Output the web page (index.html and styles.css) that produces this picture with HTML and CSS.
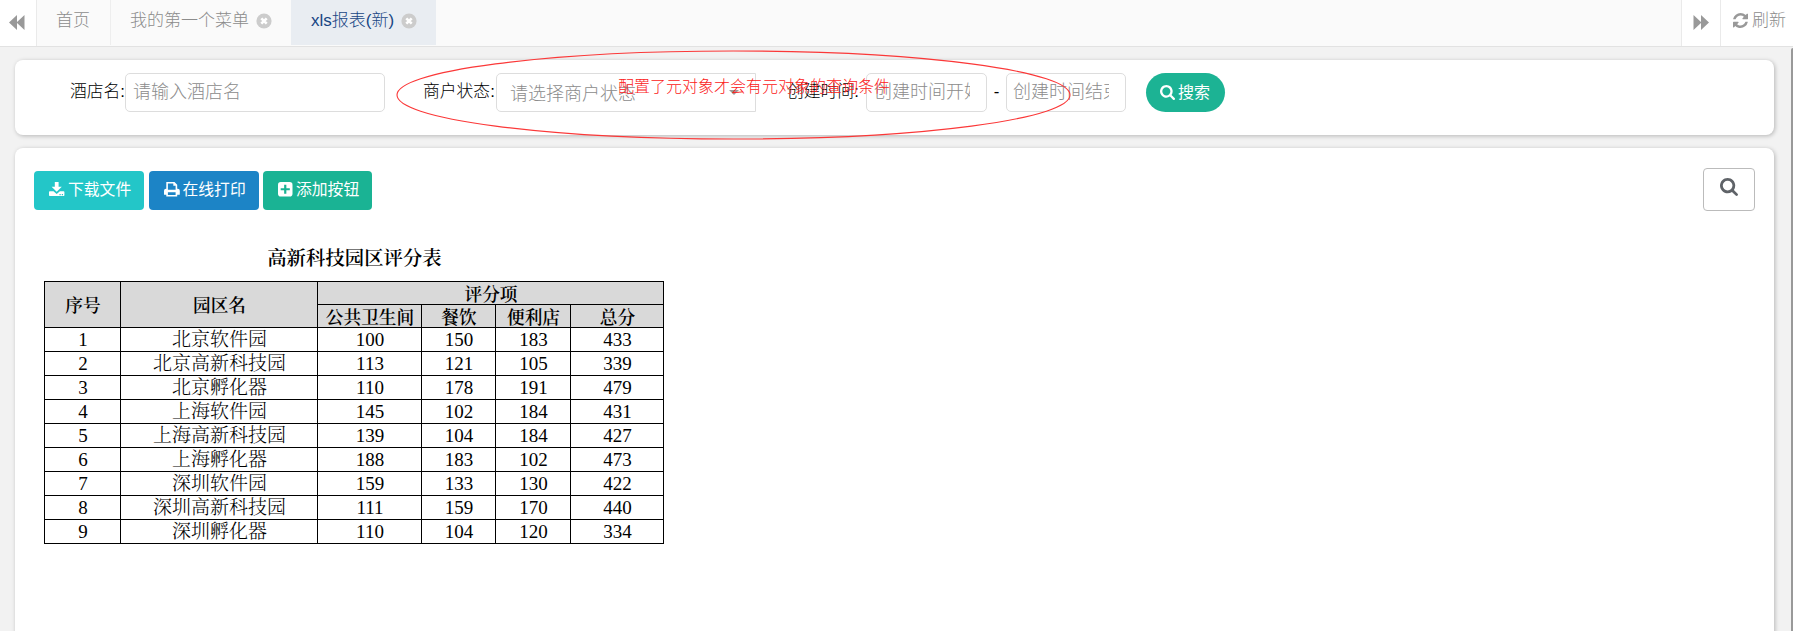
FILE: index.html
```html
<!DOCTYPE html>
<html lang="zh-CN">
<head>
<meta charset="utf-8">
<title>xls报表(新)</title>
<link rel="stylesheet" href="styles.css">
</head>
<body>
<svg width="0" height="0" class="defs">
  <symbol id="close" viewBox="0 0 16 16"><circle cx="8" cy="8" r="7.6" fill="#ccc"/><path d="M5.3 5.3l5.4 5.4M10.7 5.3l-5.4 5.4" stroke="#fff" stroke-width="2.6"/></symbol>
  <symbol id="search" viewBox="0 0 1664 1664"><path fill="currentColor" d="M1152 704q0-185-131.500-316.500t-316.500-131.500-316.500 131.500-131.500 316.500 131.500 316.500 316.500 131.500 316.500-131.500 131.500-316.500zm512 832q0 52-38 90t-90 38q-54 0-90-38l-343-342q-179 124-399 124-143 0-273.500-55.500t-225-150-150-225-55.500-273.500 55.500-273.500 150-225 225-150 273.500-55.500 273.500 55.500 225 150 150 225 55.500 273.500q0 220-124 399l343 343q37 37 37 90z"/></symbol>
</svg>
<nav class="tabs">
  <button class="nav-btn nav-left"><svg width="16" height="15" viewBox="0 0 16 15"><path fill="#999" d="M8 0v15L0 7.500zM15.500 0v15L7.500 7.500z"/></svg></button>
  <a class="tab home">首页</a>
  <a class="tab menu">我的第一个菜单<svg class="x"><use href="#close"/></svg></a>
  <a class="tab active">xls报表(新)<svg class="x"><use href="#close"/></svg></a>
  <span class="spacer"></span>
  <button class="nav-btn nav-right"><svg width="16" height="15" viewBox="0 0 16 15"><path fill="#999" d="M.5 0v15l8-7.500zM8 0v15l8-7.500z"/></svg></button>
  <button class="nav-btn refresh"><svg width="15" height="15" viewBox="0 0 1536 1536"><path fill="#999" d="M1511 928q0 5-1 7-64 268-268 434.500T764 1536q-146 0-282.500-55T238 1324l-129 129q-19 19-45 19t-45-19-19-45V960q0-26 19-45t45-19h448q26 0 45 19t19 45-19 45l-137 137q71 66 161 102t187 36q134 0 250-65t186-179q11-17 53-117 8-23 30-23h192q13 0 22.500 9.500t9.500 22.500zm25-800v448q0 26-19 45t-45 19h-448q-26 0-45-19t-19-45 19-45l138-138Q969 256 768 256q-134 0-250 65T332 500q-11 17-53 117-8 23-30 23H50q-13 0-22.500-9.500T18 608v-7q65-268 270-434.500T768 0q146 0 284 55.500T1297 212l130-129q19-19 45-19t45 19 19 45z"/></svg>刷新</button>
</nav>
<div class="body">
  <main class="content">
    <form class="card filters">
      <label>酒店名:</label><input class="name" placeholder="请输入酒店名">
      <label class="l-status">商户状态:</label><div class="select"><span>请选择商户状态</span><i class="caret"></i></div>
      <label class="l-time">创建时间:</label><input class="time" placeholder="创建时间开始"><span class="dash">-</span><input class="time end" placeholder="创建时间结束">
      <button type="button" class="go"><svg width="15" height="15"><use href="#search"/></svg>搜索</button>
    </form>
    <section class="card report">
      <div class="toolbar">
        <button class="btn cyan"><svg width="16" height="15" viewBox="0 0 16 15"><path fill="#fff" d="M5.800 0h3.800v4.800h3.200L7.700 9.800 2.600 4.800h3.200zM.8 9.200h3.700l3.200 2.800 3.200-2.800h3.700q.8 0 .8.800v3.300q0 .8-.8.800H.8q-.8 0-.8-.8V10q0-.8.800-.8z"/><path fill="#23c6c8" d="M10.500 12h1.200v1.200h-1.200zM12.800 12H14v1.200h-1.200z"/></svg>下载文件</button>
        <button class="btn blue"><svg width="16" height="15" viewBox="0 0 16 15"><path fill="#fff" fill-rule="evenodd" d="M2.300 0h8.200l2.700 2.700v4h.6q2 0 2 2v3.500q0 .5-.5.500h-2.100v1.800H2.300v-1.800H.5q-.5 0-.5-.5V8.700q0-2 2-2h.3zM3.900 1.500v6.200h7.700V3.800H9.300V1.500zM3.900 10.300V13h7.700v-2.700z"/></svg>在线打印</button>
        <button class="btn green"><svg width="15" height="15" viewBox="0 0 15 15"><rect width="14.500" height="14.500" rx="2.800" fill="#fff"/><path d="M7.250 2.700v9.100M2.700 7.250h9.100" stroke="#1ab394" stroke-width="2.200"/></svg>添加按钮</button>
        <span class="spacer"></span>
        <button class="find"><svg width="18" height="18"><use href="#search"/></svg></button>
      </div>
      <h1>高新科技园区评分表</h1>
      <table>
        <colgroup><col class="c1"><col class="c2"><col class="c3"><col class="c4"><col class="c5"><col class="c6"></colgroup>
        <thead>
          <tr><th rowspan="2">序号</th><th rowspan="2">园区名</th><th colspan="4">评分项</th></tr>
          <tr><th>公共卫生间</th><th>餐饮</th><th>便利店</th><th>总分</th></tr>
        </thead>
        <tbody>
          <tr><td>1</td><td>北京软件园</td><td>100</td><td>150</td><td>183</td><td>433</td></tr>
          <tr><td>2</td><td>北京高新科技园</td><td>113</td><td>121</td><td>105</td><td>339</td></tr>
          <tr><td>3</td><td>北京孵化器</td><td>110</td><td>178</td><td>191</td><td>479</td></tr>
          <tr><td>4</td><td>上海软件园</td><td>145</td><td>102</td><td>184</td><td>431</td></tr>
          <tr><td>5</td><td>上海高新科技园</td><td>139</td><td>104</td><td>184</td><td>427</td></tr>
          <tr><td>6</td><td>上海孵化器</td><td>188</td><td>183</td><td>102</td><td>473</td></tr>
          <tr><td>7</td><td>深圳软件园</td><td>159</td><td>133</td><td>130</td><td>422</td></tr>
          <tr><td>8</td><td>深圳高新科技园</td><td>111</td><td>159</td><td>170</td><td>440</td></tr>
          <tr><td>9</td><td>深圳孵化器</td><td>110</td><td>104</td><td>120</td><td>334</td></tr>
        </tbody>
      </table>
    </section>
  </main>
  <div class="scrollbar"></div>
</div>
<svg class="mark" width="676" height="91"><ellipse cx="337.500" cy="45" rx="336.500" ry="44" fill="none" stroke="#fb3838" stroke-width="1.100"/></svg>
<div class="note">配置了元对象才会有元对象的查询条件</div>
</body>
</html>
```

FILE: styles.css
```css
* { box-sizing: border-box; }
body {
  margin: 0;
  height: 631px;
  overflow: hidden;
  display: flex;
  flex-direction: column;
  position: relative;
  background: #f2f2f2;
  font: 300 16.8px/24px "Liberation Sans", "Noto Sans CJK SC", sans-serif;
  color: #000;
}
button, input { font: inherit; margin: 0; }
button { display: flex; align-items: center; border: 0; padding: 0; white-space: nowrap; }
svg { flex: none; }
.defs { position: absolute; }
.spacer { flex: 1; }

.tabs { display: flex; flex: none; height: 47px; background: #fafafa; border-bottom: 1px solid #e2e2e2; color: #8c8c8c; font-size: 17px; }
.nav-btn { background: #fff; color: #8c8c8c; justify-content: center; }
.nav-left { width: 37px; border-right: 1px solid #eaeaea; padding: 0 3px 2px 0; }
.nav-right { width: 39px; border-left: 1px solid #eaeaea; padding-bottom: 2px; }
.refresh { width: 73px; border-left: 1px solid #eaeaea; justify-content: flex-start; gap: 4px; padding: 0 0 5px 12px; }
.tab { display: flex; align-items: center; height: 45px; padding: 0 19px 4px; white-space: nowrap; }
.home { width: 74px; border-right: 1px solid #eee; }
.menu { width: 180px; }
.active { width: 145px; padding-left: 20px; background: #e9edf2; color: #184684; }
.x { width: 16px; height: 16px; margin-left: 7px; }

.body { flex: 1; display: flex; min-height: 0; }
.content { flex: 1; display: flex; flex-direction: column; gap: 13px; padding: 13px 17px 0 15px; }
.scrollbar { width: 2px; background: #999; margin-top: 1px; border-radius: 2px 0 0; }
.card { background: #fff; border-radius: 8px; box-shadow: 1px 1px 4px rgba(0, 0, 0, .25); }

.filters { flex: none; height: 75px; display: flex; align-items: flex-start; padding: 13px 0 0 55px; white-space: nowrap; }
.filters label { line-height: 38px; width: 55px; }
.filters .l-status { width: 73px; margin-left: 38px; }
.filters .l-time { width: 79px; margin-left: 31px; }
.filters input, .select { height: 39px; border: 1px solid #ddd; border-radius: 5px; background: #fff; font-size: 18px; color: #8c8c8c; }
.filters input { padding: 0 7px; outline: 0; }
.filters input::placeholder { color: #8c8c8c; opacity: 1; }
.filters .name { width: 260px; }
.filters .time { width: 121px; padding-right: 16px; }
.filters .end { width: 120px; padding-left: 6px; }
.select { width: 260px; display: flex; align-items: center; justify-content: space-between; padding: 3px 16px 0 13px; border-radius: 5px 0 0 5px; }
.caret { border: 5px solid transparent; border-top-color: #999; border-bottom: 0; margin-bottom: 4px; }
.dash { width: 19px; text-align: center; line-height: 38px; }
.go { width: 79px; height: 39px; margin-left: 20px; border-radius: 20px; background: #1cb394; color: #fff; font-size: 16px; font-weight: 400; gap: 3px; padding-left: 14px; }

.report { flex: none; height: 520px; padding: 20px 19px 0; }
.toolbar { display: flex; align-items: flex-start; gap: 4.500px; height: 69px; }
.btn { height: 39px; width: 110px; margin-top: 3px; border-radius: 4px; color: #fff; font-size: 15.8px; font-weight: 400; gap: 3px; padding: 0 0 1px 15px; }
.btn svg { margin-bottom: 2px; }
.cyan { background: #23c6c8; }
.blue { background: #1c84c6; }
.green { background: #1ab394; width: 109px; }
.find { width: 52px; height: 43px; background: #fff; border: 1px solid #bbb; border-radius: 4px; justify-content: center; color: #5f6368; padding-bottom: 5px; }
h1 { margin: 0 0 0 10px; width: 621px; height: 44px; text-align: center; font: 600 19.400px/40px "Noto Serif CJK SC", "Noto Sans CJK SC", sans-serif; color: #000; }
table { margin-left: 10px; width: 620px; table-layout: fixed; border-collapse: collapse; color: #000; font: 300 19px/20px "Liberation Serif", "Noto Serif CJK SC", "Noto Sans CJK SC", serif; }
th, td { border: 1px solid #000; padding: 1px 0 0 1px; text-align: center; white-space: nowrap; }
th { background: #d9d9d9; height: 23px; font-size: 17.700px; font-weight: 600; font-family: "Noto Serif CJK SC", "Noto Sans CJK SC", serif; line-height: 20px; }
td { height: 24px; }
.c1 { width: 76px; }
.c2 { width: 197px; }
.c3 { width: 104px; }
.c4 { width: 74px; }
.c5 { width: 75px; }
.c6 { width: 93px; }

.mark { position: absolute; left: 396px; top: 50px; }
.note { position: absolute; left: 618px; top: 75px; font-size: 16px; color: #fb2020; white-space: nowrap; }
```
